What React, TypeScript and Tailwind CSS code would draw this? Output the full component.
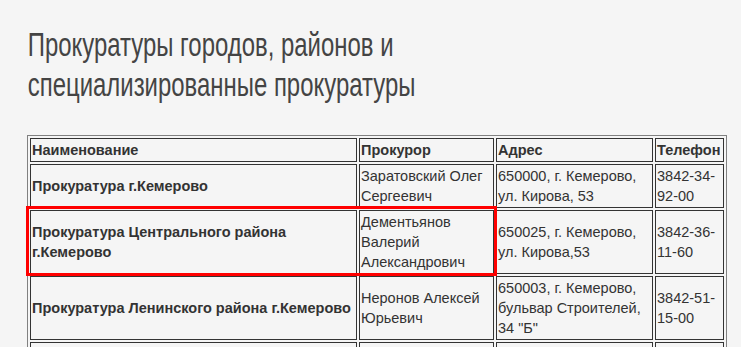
import React from 'react';

const rows = [
  {
    name: 'Прокуратура г.Кемерово',
    head: 'Заратовский Олег Сергеевич',
    address: '650000, г. Кемерово, ул. Кирова, 53',
    phone: '3842-34-92-00',
  },
  {
    name: 'Прокуратура Центрального района г.Кемерово',
    head: 'Дементьянов Валерий Александрович',
    address: '650025, г. Кемерово, ул. Кирова,53',
    phone: '3842-36-11-60',
  },
  {
    name: 'Прокуратура Ленинского района г.Кемерово',
    head: 'Неронов Алексей Юрьевич',
    address: '650003, г. Кемерово, бульвар Строителей, 34 "Б"',
    phone: '3842-51-15-00',
  },
];

const cell = 'border border-[#333] p-px align-middle';

export default function App() {
  return (
    <div className="relative min-h-screen bg-[#f5f5f5] pl-[27px] pt-[25px] font-['Liberation_Sans',Arial,sans-serif] text-[#333]">
      {/* condensed headline: no narrow face installed, so squeeze the regular one */}
      <h1 className="w-[560px] origin-left scale-x-[0.725] pl-px text-[33px] leading-[40px] text-[#444]">
        Прокуратуры городов, районов и специализированные прокуратуры
      </h1>

      <table className="mt-[30px] w-[700px] table-fixed border-separate border-spacing-[2px] border border-[#808080] text-[14.5px] leading-[20px]">
        <thead>
          <tr className="text-left font-bold">
            <th className={`${cell} w-[327px]`}>Наименование</th>
            <th className={`${cell} w-[135px]`}>Прокурор</th>
            <th className={`${cell} w-[157px]`}>Адрес</th>
            <th className={`${cell} w-[69px]`}>Телефон</th>
          </tr>
        </thead>
        <tbody>
          {rows.map((r) => (
            <tr key={r.name}>
              <td className={`${cell} font-bold`}>{r.name}</td>
              <td className={cell}>{r.head}</td>
              <td className={cell}>{r.address}</td>
              <td className={cell}>{r.phone}</td>
            </tr>
          ))}
          <tr className="h-[64px]">
            <td className={cell} />
            <td className={cell} />
            <td className={cell} />
            <td className={cell} />
          </tr>
        </tbody>
      </table>

      {/* annotation frame over the second row */}
      <div className="pointer-events-none absolute left-[26px] top-[206px] h-[70px] w-[471px] border-[3px] border-[#ff0000]" />
    </div>
  );
}
